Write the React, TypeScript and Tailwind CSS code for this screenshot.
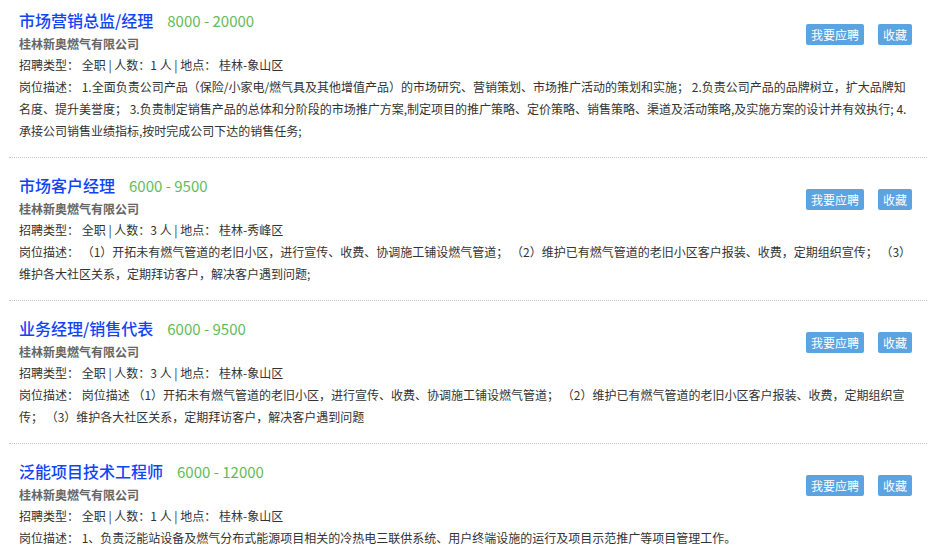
const JOBS = [
  {
    title: '市场营销总监/经理',
    salary: '8000 - 20000',
    company: '桂林新奥燃气有限公司',
    count: 1,
    place: '桂林-象山区',
    desc: '岗位描述： 1.全面负责公司产品（保险/小家电/燃气具及其他增值产品）的市场研究、营销策划、市场推广活动的策划和实施； 2.负责公司产品的品牌树立，扩大品牌知名度、提升美誉度； 3.负责制定销售产品的总体和分阶段的市场推广方案,制定项目的推广策略、定价策略、销售策略、渠道及活动策略,及实施方案的设计并有效执行; 4.承接公司销售业绩指标,按时完成公司下达的销售任务;',
  },
  {
    title: '市场客户经理',
    salary: '6000 - 9500',
    company: '桂林新奥燃气有限公司',
    count: 3,
    place: '桂林-秀峰区',
    desc: '岗位描述： （1）开拓未有燃气管道的老旧小区，进行宣传、收费、协调施工铺设燃气管道； （2）维护已有燃气管道的老旧小区客户报装、收费，定期组织宣传； （3）维护各大社区关系，定期拜访客户，解决客户遇到问题;',
  },
  {
    title: '业务经理/销售代表',
    salary: '6000 - 9500',
    company: '桂林新奥燃气有限公司',
    count: 3,
    place: '桂林-象山区',
    desc: '岗位描述： 岗位描述 （1）开拓未有燃气管道的老旧小区，进行宣传、收费、协调施工铺设燃气管道； （2）维护已有燃气管道的老旧小区客户报装、收费，定期组织宣传； （3）维护各大社区关系，定期拜访客户，解决客户遇到问题',
  },
  {
    title: '泛能项目技术工程师',
    salary: '6000 - 12000',
    company: '桂林新奥燃气有限公司',
    count: 1,
    place: '桂林-象山区',
    desc: '岗位描述： 1、负责泛能站设备及燃气分布式能源项目相关的冷热电三联供系统、用户终端设施的运行及项目示范推广等项目管理工作。',
  },
]

type Job = (typeof JOBS)[number]

function JobItem({ job, first }: { job: Job; first: boolean }) {
  return (
    <div
      className={`relative border-b border-dotted border-[#c8c8c8] pl-[10px] pr-[15px] pb-[15px] ${first ? 'pt-[6px]' : 'pt-[13px]'}`}
    >
      {/* Title + salary */}
      <div className="flex items-baseline h-[28px] leading-[28px]">
        <span className="text-[16px] font-medium text-[#0f44f8]">{job.title}</span>
        <span className="ml-[14px] text-[15px] text-[#62bb5a]">{job.salary}</span>
      </div>

      <div className="text-[12px] leading-[20px] font-bold text-[#666]">{job.company}</div>
      <div className="text-[12px] leading-[22px] text-[#333]">
        招聘类型： 全职 | 人数：{job.count} 人 | 地点： {job.place}
      </div>
      <p className="text-[12px] leading-[22px] text-[#333]">{job.desc}</p>

      {/* Actions */}
      <div className={`absolute right-[15px] flex gap-[14px] ${first ? 'top-[24px]' : 'top-[31px]'}`}>
        <button className="h-[21px] px-[5px] rounded-[2px] bg-[#5ca3e2] text-[12px] leading-[21px] text-white">
          我要应聘
        </button>
        <button className="h-[21px] px-[5px] rounded-[2px] bg-[#5ca3e2] text-[12px] leading-[21px] text-white">
          收藏
        </button>
      </div>
    </div>
  )
}

export default function App() {
  return (
    <div
      className="w-[936px] h-[557px] overflow-hidden bg-white px-[9px]"
      style={{ fontFamily: '"Noto Sans CJK SC", "Noto Sans", sans-serif' }}
    >
      {JOBS.map((job, i) => (
        <JobItem key={job.title} job={job} first={i === 0} />
      ))}
    </div>
  )
}
